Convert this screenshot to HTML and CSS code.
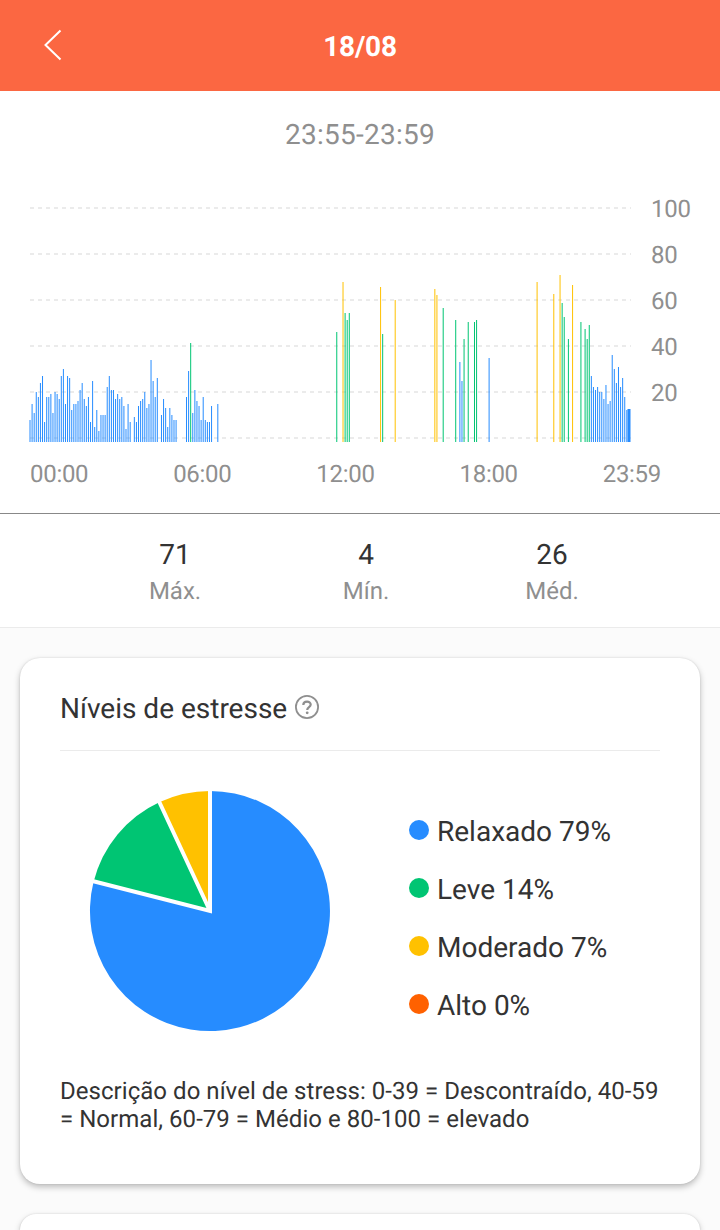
FILE: index.html
```html
<!DOCTYPE html>
<html lang="pt">
<head>
  <meta charset="UTF-8" />
  <title>Estresse 18/08</title>
  <link rel="stylesheet" href="styles.css">
</head>
<body>

<header class="header">
  <svg class="back" width="20" height="32" viewBox="0 0 20 32">
    <path d="M17.5 1.5 L2.5 16 L17.5 30.5" />
  </svg>
  <h1>18/08</h1>
</header>

<section class="day">
  <div class="range">23:55-23:59</div>

  <div class="chart">
    <svg id="chart" width="604" height="250" viewBox="28 194 604 250"></svg>
    <div class="y-axis">
      <span>100</span>
      <span>80</span>
      <span>60</span>
      <span>40</span>
      <span>20</span>
    </div>
  </div>
  <div class="x-axis">
    <span>00:00</span>
    <span>06:00</span>
    <span>12:00</span>
    <span>18:00</span>
    <span>23:59</span>
  </div>

  <div class="stats">
    <div class="stat"><b>71</b><span>Máx.</span></div>
    <div class="stat"><b>4</b><span>Mín.</span></div>
    <div class="stat"><b>26</b><span>Méd.</span></div>
  </div>
</section>

<section class="card">
  <div class="card-title">
    <h2>Níveis de estresse</h2>
    <svg class="help" width="24" height="24" viewBox="0 0 24 24">
      <circle cx="12" cy="12" r="11.1" />
      <path d="M8.3 9.9 C8.3 5.5 15.7 5.5 15.7 9.6 C15.7 12 12.2 12.2 12.2 15" />
      <circle class="dot" cx="12.2" cy="17.8" r="1.4" />
    </svg>
  </div>

  <div class="levels">
    <svg class="pie" width="242" height="242" viewBox="-121 -121 242 242">
      <path class="relaxed" d="M0 0 L0 -120 A120 120 0 1 1 -116.5 -28.9 Z" />
      <path class="light" d="M0 0 L-116.5 -28.9 A120 120 0 0 1 -50.2 -109 Z" />
      <path class="moderate" d="M0 0 L-50.2 -109 A120 120 0 0 1 0 -120 Z" />
      <path class="gap" d="M0 -122 V0 L-118.5 -30.2 M0 0 L-51.6 -111" />
    </svg>
    <ul class="legend">
      <li><i class="bg-relaxed"></i>Relaxado 79%</li>
      <li><i class="bg-light"></i>Leve 14%</li>
      <li><i class="bg-moderate"></i>Moderado 7%</li>
      <li><i class="bg-high"></i>Alto 0%</li>
    </ul>
  </div>

  <p class="description">Descrição do nível de stress: 0-39 = Descontraído, 40-59<br>= Normal, 60-79 = Médio e 80-100 = elevado</p>
</section>

<section class="card next"></section>

<script>
  // first 5-minute slot of each run, followed by its readings
  const runs = [
    [0, 8, 15, 11, 20, 18, 24, 27, 7, 18, 18, 19, 11, 20, 19, 17, 27, 30, 15, 27, 26, 12, 15, 15, 16,
      21, 24, 17, 14, 18, 7, 25, 5, 12, 3, 10, 10, 10, 22, 27, 21, 21, 17, 19, 17, 18, 14, 4, 15, 7],
    [50, 9, 7, 14, 16, 17, 20, 13, 15, 34, 25, 18, 26],
    [63, 10, 17, 13, 5, 13, 10, 8, 8],
    [75, 18, 29, 41.3, 11, 21, 16, 14, 8, 18, 8, 7, 7, 14],
    [90, 15],
    [147, 46],
    [150, 68, 54.3, 51.3, 54.3],
    [168, 65.6, 45.2],
    [175, 60],
    [194, 65, 62],
    [198, 56.5],
    [204, 51.3],
    [206, 33, 25, 43],
    [210, 50.4],
    [213, 50.4, 51.3],
    [220, 35],
    [243, 68],
    [251, 62.6],
    [254, 71, 58.7, 52.6],
    [258, 43],
    [260, 66.5],
    [264, 50.4],
    [266, 47.4, 43, 49, 27, 22, 21, 22, 20, 20, 17, 23, 15, 16, 36, 30, 24, 31, 22, 26, 18, 12, 12.6]
  ];

  const left = 30;
  const step = 601 / 1440 * 5;
  const zero = 438;
  const unit = 2.3;

  function level(v) {
    if (v >= 80) return "high";
    if (v >= 60) return "moderate";
    if (v >= 40) return "light";
    return "relaxed";
  }

  function bar(x, width, v) {
    const y = Math.round(zero - v * unit);
    return `<rect class="${level(v)}" x="${x.toFixed(2)}" y="${y}" width="${width}" height="${442 - y}" />`;
  }

  let out = "";
  for (let v = 0; v <= 100; v += 20) {
    const y = zero - v * unit;
    out += `<line class="grid" x1="30" y1="${y}" x2="631" y2="${y}" />`;
  }
  runs.forEach(([start, ...values]) => {
    values.forEach((v, i) => {
      out += bar(left + (start + i) * step - 0.5, 1, v);
    });
  });
  // selected slot, 23:55-23:59
  out += bar(627.5, 3, 12.6);
  document.getElementById("chart").innerHTML = out;
</script>

</body>
</html>
```

FILE: styles.css
```css
* {
  box-sizing: border-box;
}
html {
  height: 100%;
  overflow: hidden;
}
body {
  margin: 0;
  height: 100%;
  display: flex;
  flex-direction: column;
  overflow: hidden;
  background: #fbfbfb;
  color: #333;
  font-family: Roboto, sans-serif;
  text-rendering: geometricPrecision;
}
h1, h2, p, ul {
  margin: 0;
  padding: 0;
}
.header {
  flex: none;
  height: 91px;
  display: grid;
  grid-template-columns: 80px 1fr 80px;
  align-items: center;
  background: #fb6742;
  color: #fff;
}
.header h1 {
  font-size: 28px;
  line-height: 32px;
  font-weight: bold;
  letter-spacing: -0.2px;
  text-align: center;
  padding-top: 2px;
}
.back {
  justify-self: end;
  margin: 0 17px 1px 0;
  fill: none;
  stroke: #fff;
  stroke-width: 2;
}
.day {
  flex: none;
  height: 537px;
  background: #fff;
  border-bottom: 1px solid #ebebeb;
}
.range {
  padding-top: 28px;
  height: 103px;
  font-size: 28px;
  line-height: 32px;
  letter-spacing: 0.25px;
  text-align: center;
  color: #8f8f8f;
}
.chart {
  display: flex;
  padding-left: 28px;
  height: 250px;
}
.y-axis {
  padding-left: 19px;
  font-size: 24px;
  line-height: 46px;
  letter-spacing: -0.3px;
  color: #8f8f8f;
  margin-top: -8px;
}
.y-axis span {
  display: block;
}
.x-axis {
  display: flex;
  justify-content: space-between;
  padding: 16px 59px 0 30px;
  height: 69px;
  font-size: 24px;
  line-height: 28px;
  letter-spacing: -0.3px;
  color: #8f8f8f;
}
.stats {
  display: grid;
  grid-template-columns: 190px 192px 180px;
  padding: 25px 0 0 80px;
  border-top: 1px solid #888;
  text-align: center;
}
.stat b {
  display: block;
  font-size: 28px;
  font-weight: normal;
  line-height: 32px;
}
.stat span {
  display: block;
  margin-top: 6px;
  font-size: 24px;
  line-height: 28px;
  color: #8f8f8f;
}
.card {
  flex: none;
  height: 526px;
  margin: 30px 20px 0;
  padding: 0 40px;
  background: #fff;
  border-radius: 20px;
  box-shadow: 0 3px 6px rgba(0, 0, 0, 0.25), 0 0 2px rgba(0, 0, 0, 0.12);
}
.card-title {
  display: flex;
  height: 93px;
  padding-top: 35px;
  border-bottom: 1px solid #ebebeb;
}
.card-title h2 {
  width: 227px;
  font-size: 28px;
  line-height: 32px;
  font-weight: normal;
  white-space: nowrap;
}
.help {
  margin: 2px 0 0 8px;
  fill: none;
  stroke: #8f8f8f;
  stroke-width: 1.8;
}
.help path {
  stroke-width: 2.2;
}
.help .dot {
  fill: #8f8f8f;
  stroke: none;
}
.levels {
  display: flex;
  padding: 39px 0 0 29px;
}
.pie {
  flex: none;
}
.legend {
  margin: 13px 0 0 78px;
  list-style: none;
  font-size: 28px;
  line-height: 58px;
}
.legend li {
  display: flex;
  align-items: center;
  height: 58px;
}
.legend i {
  width: 20px;
  height: 20px;
  margin: -4px 8px 0 0;
  border-radius: 50%;
}
.description {
  margin-top: 42px;
  font-size: 24px;
  line-height: 28px;
  letter-spacing: 0.04px;
  white-space: nowrap;
}
.next {
  flex: 1 1 0;
  height: auto;
  min-height: 0;
  border-radius: 20px 20px 0 0;
}

/* level colours */
.relaxed { fill: #268cff; }
.light { fill: #00c573; }
.moderate { fill: #ffc100; }
.high { fill: #ff6100; }
.bg-relaxed { background: #268cff; }
.bg-light { background: #00c573; }
.bg-moderate { background: #ffc100; }
.bg-high { background: #ff6100; }

.gap {
  fill: none;
  stroke: #fff;
  stroke-width: 4;
}
.grid {
  stroke: #ebebeb;
  stroke-width: 2;
  stroke-dasharray: 4 4;
}
```
